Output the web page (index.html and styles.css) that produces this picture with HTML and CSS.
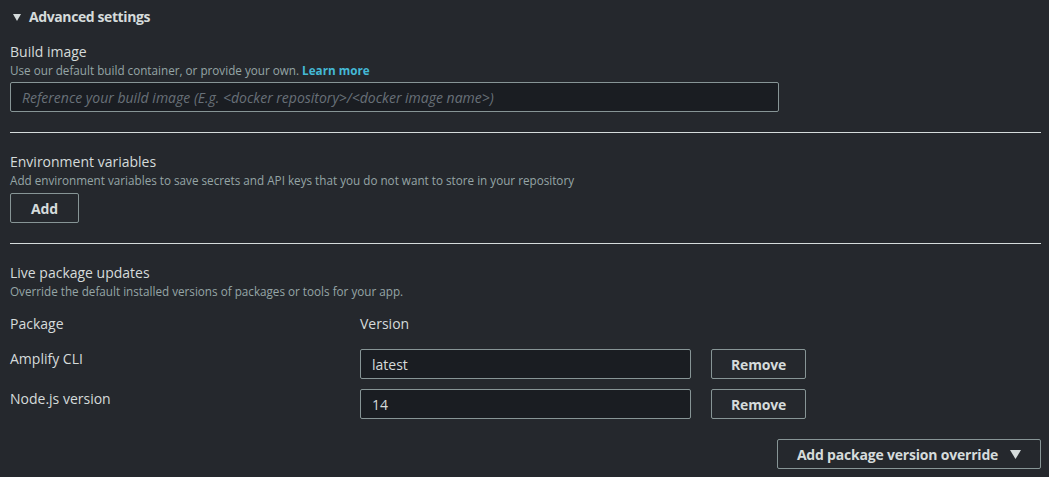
FILE: index.html
```html
<!DOCTYPE html>
<html>
<head>
<meta charset="utf-8">
<link rel="stylesheet" href="styles.css">
</head>
<body>
<div class="page">
  <div class="header">
    <svg class="caret" width="8" height="7" viewBox="0 0 8 7"><polygon points="0,0 8,0 4,7" fill="#d5dbdb"/></svg>
    <span class="header-title">Advanced settings</span>
  </div>

  <div class="section first">
    <div class="label">Build image</div>
    <div class="desc">Use our default build container, or provide your own. <a class="link" href="#">Learn more</a></div>
    <input class="input wide" type="text" placeholder="Reference your build image (E.g. <docker repository>/<docker image name>)">
  </div>
  <div class="divider"></div>

  <div class="section">
    <div class="label">Environment variables</div>
    <div class="desc">Add environment variables to save secrets and API keys that you do not want to store in your repository</div>
    <button class="btn add">Add</button>
  </div>
  <div class="divider"></div>

  <div class="section last">
    <div class="label">Live package updates</div>
    <div class="desc">Override the default installed versions of packages or tools for your app.</div>
    <div class="grid">
      <div class="col-head">Package</div>
      <div class="col-head">Version</div>
      <div></div>
      <div class="pkg">Amplify CLI</div>
      <input class="input ver" type="text" value="latest">
      <button class="btn remove">Remove</button>
      <div class="pkg">Node.js version</div>
      <input class="input ver" type="text" value="14">
      <button class="btn remove">Remove</button>
    </div>
    <div class="actions">
      <button class="btn override">Add package version override <svg class="caret2" width="11" height="9" viewBox="0 0 11 9"><polygon points="0,0 11,0 5.5,9" fill="#d5dbdb"/></svg></button>
    </div>
  </div>
</div>
</body>
</html>
```

FILE: styles.css
```css
html, body {
  margin: 0;
  padding: 0;
  background: #25282d;
}
body {
  font-family: "Open Sans", "Liberation Sans", sans-serif;
  color: #d5dbdb;
  width: 1049px;
  height: 477px;
  overflow: hidden;
}
.page {
  padding: 0 8px 0 10px;
}
.header {
  height: 34px;
  display: flex;
  align-items: center;
  padding-left: 3px;
}
.caret {
  margin-right: 8px;
  margin-top: 1px;
}
.header-title {
  font-size: 14px;
  font-weight: 700;
  line-height: 20px;
  letter-spacing: -0.4px;
}
.section {
  padding: 19px 0 20px;
}
.section.first {
  padding-top: 8px;
}
.section.last {
  padding-bottom: 0;
}
.label {
  font-size: 14px;
  line-height: 20px;
}
.desc {
  font-size: 11.7px;
  line-height: 16px;
  color: #95a5a6;
}
.link {
  color: #44b9d6;
  font-weight: 700;
  text-decoration: none;
}
.input {
  display: block;
  box-sizing: border-box;
  height: 30px;
  background: #1a1d22;
  border: 1px solid #879596;
  border-radius: 2px;
  color: #d5dbdb;
  font-family: inherit;
  font-size: 14px;
  padding: 0 11px;
  outline: none;
}
.input.wide {
  width: 769px;
  margin-top: 4px;
}
.input::placeholder {
  color: #687078;
  font-style: italic;
}
.divider {
  height: 1px;
  background: #d5dbdb;
}
.btn {
  box-sizing: border-box;
  height: 30px;
  background: transparent;
  border: 1px solid #879596;
  border-radius: 2px;
  color: #d5dbdb;
  font-family: inherit;
  font-size: 14px;
  font-weight: 700;
  letter-spacing: -0.2px;
  padding: 0 20px;
  cursor: pointer;
}
.btn.add {
  display: block;
  width: 69px;
  margin-top: 5px;
}
.grid {
  display: grid;
  grid-template-columns: 330px 331px 95px;
  column-gap: 20px;
  row-gap: 10px;
  margin-top: 15px;
}
.col-head {
  font-size: 14px;
  line-height: 20px;
  margin-bottom: 5px;
}
.pkg {
  font-size: 14px;
  line-height: 20px;
}
.btn.remove {
  width: 95px;
  padding: 0;
}
.actions {
  display: flex;
  justify-content: flex-end;
  margin-top: 20px;
}
.btn.override {
  width: 264px;
  display: flex;
  align-items: center;
  justify-content: center;
  gap: 12px;
  padding: 0;
}
.caret2 {
  margin-top: 1px;
}
```
